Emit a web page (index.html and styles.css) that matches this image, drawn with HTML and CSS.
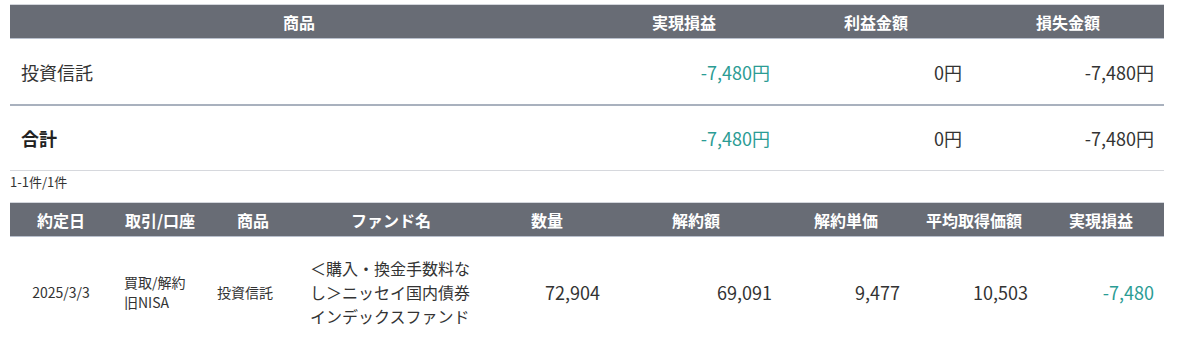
FILE: index.html
```html
<!DOCTYPE html>
<html lang="ja">
<head>
<meta charset="utf-8">
<link rel="stylesheet" href="styles.css">
</head>
<body>
<div class="wrap">
  <table class="summary">
    <colgroup>
      <col class="c-s1"><col class="c-s2"><col class="c-s2"><col class="c-s2">
    </colgroup>
    <thead>
      <tr><th>商品</th><th>実現損益</th><th>利益金額</th><th>損失金額</th></tr>
    </thead>
    <tbody>
      <tr class="row-item">
        <td class="name">投資信託</td>
        <td class="num loss">-7,480円</td>
        <td class="num">0円</td>
        <td class="num">-7,480円</td>
      </tr>
      <tr class="row-total">
        <td class="name total">合計</td>
        <td class="num loss">-7,480円</td>
        <td class="num">0円</td>
        <td class="num">-7,480円</td>
      </tr>
    </tbody>
  </table>

  <div class="count">1-1件/1件</div>

  <table class="detail">
    <colgroup>
      <col class="d1"><col class="d2"><col class="d3"><col class="d4"><col class="d5"><col class="d6"><col class="d7"><col class="d8"><col class="d9">
    </colgroup>
    <thead>
      <tr>
        <th>約定日</th><th>取引/口座</th><th>商品</th><th>ファンド名</th><th>数量</th><th>解約額</th><th>解約単価</th><th>平均取得価額</th><th>実現損益</th>
      </tr>
    </thead>
    <tbody>
      <tr>
        <td class="date">2025/3/3</td>
        <td class="kind">買取/解約<br>旧NISA</td>
        <td class="prod">投資信託</td>
        <td class="fund">＜購入・換金手数料なし＞ニッセイ国内債券インデックスファンド</td>
        <td class="num">72,904</td>
        <td class="num">69,091</td>
        <td class="num">9,477</td>
        <td class="num">10,503</td>
        <td class="num loss">-7,480</td>
      </tr>
    </tbody>
  </table>
</div>
</body>
</html>
```

FILE: styles.css
```css
html, body {
  margin: 0;
  padding: 0;
  background: #ffffff;
}
body {
  font-family: "Noto Sans CJK JP", "Noto Sans", sans-serif;
  color: #333333;
}
.wrap {
  padding: 4px 0 0 10px;
  width: 1154px;
}
table {
  border-collapse: collapse;
  table-layout: fixed;
  width: 1154px;
}
thead tr {
  background: #686c75;
  border-top: 1px solid #d3d6dc;
  border-bottom: 1px solid #b9c0cd;
}
th {
  color: #ffffff;
  font-weight: 700;
  font-size: 16px;
  height: 33px;
  padding: 0;
  text-align: center;
  vertical-align: middle;
  line-height: 20px;
}
.c-s1 { width: 578px; }
.c-s2 { width: 192px; }

.summary td {
  font-size: 18px;
  line-height: 24px;
  padding: 0 10px;
  vertical-align: middle;
}
.summary .row-item td {
  height: 65px;
  border-bottom: 2px solid #a9b1be;
}
.summary .row-total td {
  height: 64px;
  border-bottom: 1px solid #d6d8dd;
}
.summary .name {
  text-align: left;
  padding-left: 11px;
}
.summary .total {
  font-weight: 700;
  color: #222222;
}
.num {
  text-align: right;
}
.loss {
  color: #2b9c94;
}

.count {
  font-size: 13px;
  line-height: 20px;
  height: 20px;
  padding-top: 1px;
  margin-bottom: 10px;
  color: #333333;
}

.d1 { width: 102px; }
.d2 { width: 96px; }
.d3 { width: 90px; }
.d4 { width: 186px; }
.d5 { width: 126px; }
.d6 { width: 172px; }
.d7 { width: 128px; }
.d8 { width: 128px; }
.d9 { width: 126px; }

.detail td {
  font-size: 14px;
  line-height: 20px;
  padding: 19px 10px;
  vertical-align: middle;
}
.detail .date {
  text-align: center;
}
.detail .kind {
  padding-left: 12px;
  padding-right: 4px;
}
.detail .prod {
  padding-left: 9px;
  padding-right: 4px;
}
.detail .fund {
  font-size: 16px;
  line-height: 24px;
  padding-left: 12px;
  padding-right: 12px;
}
.detail .num {
  font-size: 18px;
}
```
